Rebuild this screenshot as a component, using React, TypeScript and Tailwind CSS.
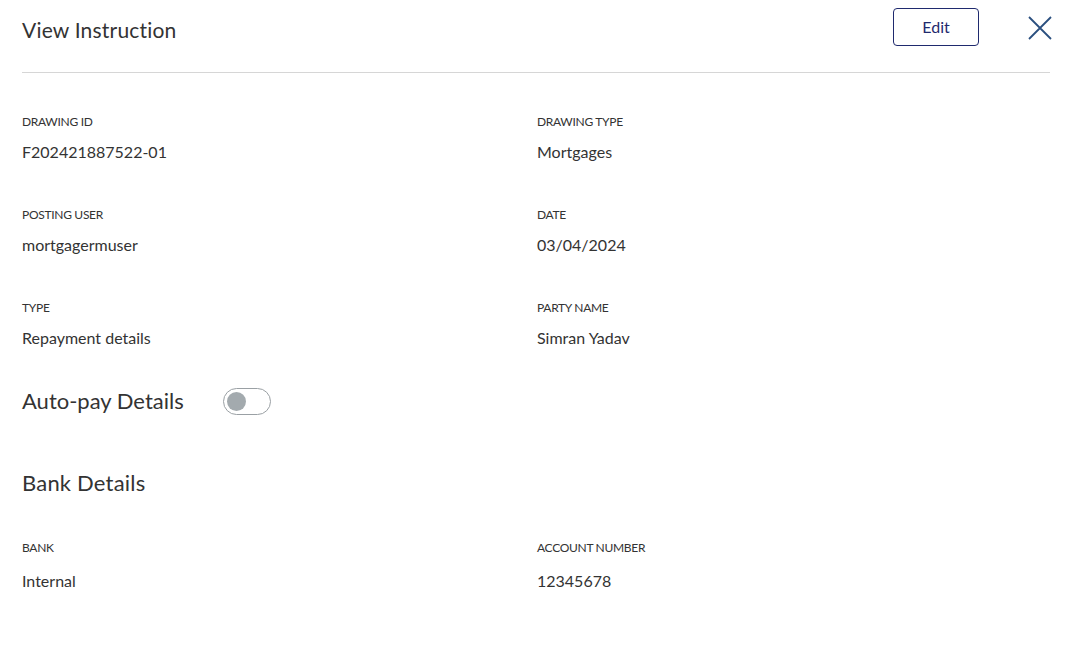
import React from "react";

const Field = ({ label, value, gap = "mt-[12px]" }: { label: string; value: string; gap?: string }) => (
  <div className="flex flex-col">
    <div className="text-[12px] leading-[16px] text-[#333] uppercase tracking-[-0.3px]">{label}</div>
    <div className={`${gap} text-[16px] leading-[20px] text-[#333]`}>{value}</div>
  </div>
);

export default function App() {
  return (
    <div
      className="w-[1071px] h-[660px] bg-white pl-[22px] pr-[21px] text-[#333]"
      style={{ fontFamily: "Lato, 'Noto Sans', sans-serif" }}
    >
      <div className="flex items-start justify-between h-[60px]">
        <h1 className="mt-[17px] text-[21px] leading-[26px] text-[#333] tracking-[0.2px]">View Instruction</h1>
        <div className="flex items-start gap-[49px] mr-[-2px] mt-[8px]">
          <button className="w-[86px] h-[38px] border border-[#1f2a6e] rounded-[4px] text-[16px] text-[#1f2a6e]">
            Edit
          </button>
          <svg width="24" height="24" viewBox="0 0 24 24" className="mt-[8px]">
            <path d="M1 1 L23 23 M23 1 L1 23" stroke="#2a4f7f" strokeWidth="1.8" fill="none" />
          </svg>
        </div>
      </div>
      <div className="mt-[12px] border-t border-[#d6d6d6]" />

      <div className="grid grid-cols-[515px_1fr] mt-[41px] gap-y-[45px]">
        <Field label="Drawing ID" value="F202421887522-01" />
        <Field label="Drawing Type" value="Mortgages" />
        <Field label="Posting User" value="mortgagermuser" />
        <Field label="Date" value="03/04/2024" />
        <Field label="Type" value="Repayment details" />
        <Field label="Party Name" value="Simran Yadav" />
      </div>

      <div className="flex items-center mt-[39px] gap-[39px]">
        <div className="text-[22px] leading-[28px] text-[#333] w-[162px]">Auto-pay Details</div>
        <div className="w-[48px] h-[27px] rounded-full border border-[#9aa0a4] flex items-center px-[3px]">
          <div className="w-[19px] h-[19px] rounded-full bg-[#a3aaae]" />
        </div>
      </div>

      <div className="mt-[54px] text-[22px] leading-[28px] text-[#333] tracking-[0.2px]">Bank Details</div>

      <div className="grid grid-cols-[515px_1fr] mt-[43px]">
        <Field label="Bank" value="Internal" gap="mt-[15px]" />
        <Field label="Account Number" value="12345678" gap="mt-[15px]" />
      </div>
    </div>
  );
}
